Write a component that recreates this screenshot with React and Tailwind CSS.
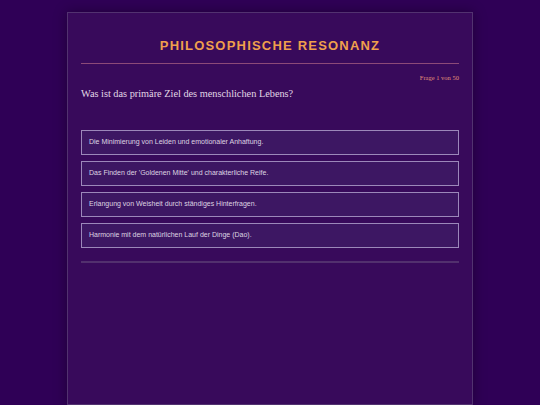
export default function App() {
  const options = [
    "Die Minimierung von Leiden und emotionaler Anhaftung.",
    "Das Finden der 'Goldenen Mitte' und charakterliche Reife.",
    "Erlangung von Weisheit durch ständiges Hinterfragen.",
    "Harmonie mit dem natürlichen Lauf der Dinge (Dao).",
  ];
  return (
    <div className="min-h-[405px] h-[405px] overflow-hidden bg-[#2f0056] flex justify-center pt-[12px]">
      <div className="w-[406px] bg-[#380a5b] border border-[#523270] shadow-[0_0_12px_rgba(0,0,0,0.35)] px-[13px] pt-[25px]">
        <h1
          className="text-center text-[#f0a04c] font-bold text-[13px] tracking-[1.2px] leading-[16px]"
          style={{ fontFamily: '"Liberation Sans", Arial, sans-serif' }}
        >
          PHILOSOPHISCHE RESONANZ
        </h1>
        <div className="mt-[9px] h-[1px] bg-[#8c4a78]" />
        <div
          className="mt-[10px] text-right text-[6.5px] text-[#e0907a] leading-[8px]"
          style={{ fontFamily: '"Liberation Serif", Georgia, serif' }}
        >
          Frage 1 von 50
        </div>
        <div
          className="mt-[5px] text-[10.3px] text-[#e2d8e6] leading-[14px]"
          style={{ fontFamily: '"Liberation Serif", Georgia, serif' }}
        >
          Was ist das primäre Ziel des menschlichen Lebens?
        </div>
        <div className="mt-[29px] flex flex-col gap-[6px]">
          {options.map((o) => (
            <div
              key={o}
              className="h-[25px] flex items-center px-[7px] border border-[#9c88ba] bg-[#3d1763] text-[7px] text-[#ddd4e2]"
              style={{ fontFamily: '"Liberation Sans", Arial, sans-serif' }}
            >
              {o}
            </div>
          ))}
        </div>
        <div className="mt-[13px] h-[2px] bg-[#52306e]" />
      </div>
    </div>
  );
}
